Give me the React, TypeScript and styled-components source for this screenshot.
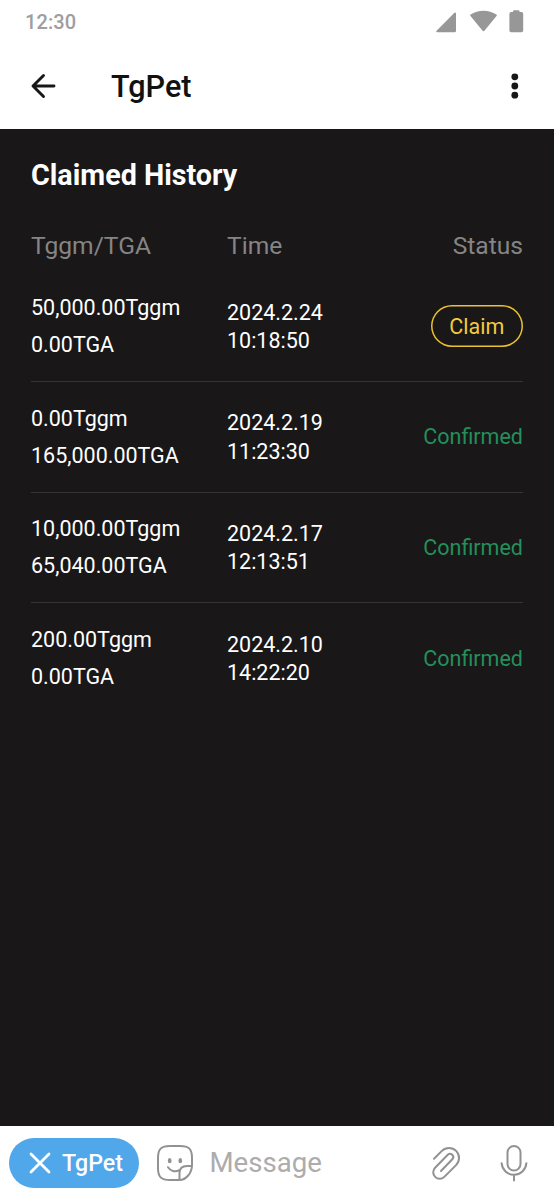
import React from "react";
import styled, { createGlobalStyle } from "styled-components";

const GlobalStyle = createGlobalStyle`
  *, *::before, *::after { box-sizing: border-box; }
  body { margin: 0; background: #fff; font-family: Roboto, sans-serif; }
  button, input { font-family: inherit; }
  svg { display: block; flex: none; }
`;

const Screen = styled.div`
  width: 554px;
  height: 1200px;
  display: flex;
  flex-direction: column;
  background: #fff;
  overflow: hidden;
`;

const StatusBar = styled.div`
  height: 43px;
  padding: 0 29px 0 25px;
  display: flex;
  justify-content: space-between;
  align-items: center;
  color: #979797;
`;

const Clock = styled.span`
  font-size: 20px;
  font-weight: 500;
  line-height: 24px;
  letter-spacing: 0.1px;
  color: #9e9e9e;
`;

const AppBar = styled.header`
  height: 86px;
  padding: 0 30px;
  display: flex;
  align-items: center;
`;

const IconButton = styled.button`
  padding: 0;
  border: 0;
  background: none;
  color: #171717;
`;

const AppTitle = styled.h1`
  flex: 1;
  margin: 0 0 0 55px;
  padding-top: 2px;
  font-size: 30.6px;
  line-height: 36px;
  font-weight: 500;
  color: #111;
`;

const Content = styled.main`
  flex: 1;
  padding: 28px 31px 0;
  background: #191718;
  color: #fff;
`;

const Heading = styled.h2`
  margin: 0;
  font-size: 28.7px;
  line-height: 36px;
  font-weight: 700;
`;

const Row = styled.div`
  display: grid;
  grid-template-columns: 196px 1fr auto;
  align-items: center;
`;

const HeaderRow = styled(Row)`
  height: 50px;
  margin-top: 27px;
  font-size: 24.6px;
  color: #858585;
`;

const RecordRow = styled(Row)`
  height: 110.8px;
  border-top: 1px solid transparent;
  font-size: 21.5px;
  & + & { border-top-color: #363435; }
`;

const Amounts = styled.div`
  line-height: 37px;
`;

const Time = styled.div`
  padding-top: 2px;
  line-height: 28.3px;
`;

const Confirmed = styled.span`
  color: #23905b;
`;

const ClaimButton = styled.button`
  width: 92.5px;
  height: 42px;
  padding: 2px 0 0;
  border: 0;
  border-radius: 21px;
  box-shadow: inset 0 0 0 1.5px #edc22f;
  background: none;
  color: #f3ca3e;
  font-size: 21.5px;
`;

const MessageBar = styled.footer`
  height: 74px;
  padding: 0 26px 0 9px;
  display: flex;
  align-items: center;
  color: #929292;
`;

const BotButton = styled.button`
  width: 130px;
  height: 50px;
  padding: 0 0 0 20px;
  display: flex;
  align-items: center;
  gap: 11px;
  border: 0;
  border-radius: 25px;
  background: #50a7ea;
  color: #fff;
  font-size: 23.2px;
  font-weight: 500;
`;

const StickerIcon = styled.svg`
  margin-left: 17px;
`;

const Placeholder = styled.span`
  flex: 1;
  margin-left: 15.5px;
  font-size: 27.6px;
  line-height: 32px;
  color: #acacac;
`;

const MicIcon = styled.svg`
  margin-left: 38px;
`;

interface ClaimRecord {
  tggm: string;
  tga: string;
  date: string;
  time: string;
  claimable?: boolean;
}

const records: ClaimRecord[] = [
  { tggm: "50,000.00", tga: "0.00", date: "2024.2.24", time: "10:18:50", claimable: true },
  { tggm: "0.00", tga: "165,000.00", date: "2024.2.19", time: "11:23:30" },
  { tggm: "10,000.00", tga: "65,040.00", date: "2024.2.17", time: "12:13:51" },
  { tggm: "200.00", tga: "0.00", date: "2024.2.10", time: "14:22:20" },
];

export default function App() {
  return (
    <Screen>
      <GlobalStyle />
      <StatusBar>
        <Clock>12:30</Clock>
        <svg width="89" height="24" viewBox="0 0 89 24" fill="currentColor">
          <path d="M1.5 22.2Q-.6 22.2.8 20.5L18 3.2Q20 1.7 20 3.8V20.7Q20 22.2 18.5 22.2Z" />
          <path d="M34.5 6Q33.7 5.2 34.6 4.5C42-.6 53-.6 60.4 4.5Q61.3 5.2 60.5 6L48.6 20.6Q47.5 21.9 46.4 20.6Z" />
          <path d="M75.2 2H77V1.4Q77 .2 78.2.2H82.4Q83.6.2 83.6 1.4V2H85.5Q87.2 2 87.2 3.7V20.5Q87.2 22.2 85.5 22.2H75.1Q73.4 22.2 73.4 20.5V3.7Q73.4 2 75.2 2Z" />
        </svg>
      </StatusBar>
      <AppBar>
        <IconButton aria-label="Back">
          <svg width="26" height="26" viewBox="0 0 26 26" fill="none" stroke="currentColor" strokeWidth="2.9" strokeLinecap="round" strokeLinejoin="round">
            <path d="M24 13H3M13.5 2.5 3 13l10.5 10.5" />
          </svg>
        </IconButton>
        <AppTitle>TgPet</AppTitle>
        <IconButton aria-label="Menu">
          <svg width="18" height="28" viewBox="0 0 18 28" fill="currentColor">
            <circle cx="8.8" cy="4.8" r="3.4" />
            <circle cx="8.8" cy="14" r="3.4" />
            <circle cx="8.8" cy="23.2" r="3.4" />
          </svg>
        </IconButton>
      </AppBar>
      <Content>
        <Heading>Claimed History</Heading>
        <HeaderRow>
          <span>Tggm/TGA</span>
          <span>Time</span>
          <span>Status</span>
        </HeaderRow>
        {records.map((r) => (
          <RecordRow key={r.date}>
            <Amounts>
              <div>{r.tggm}Tggm</div>
              <div>{r.tga}TGA</div>
            </Amounts>
            <Time>
              <div>{r.date}</div>
              <div>{r.time}</div>
            </Time>
            {r.claimable ? <ClaimButton>Claim</ClaimButton> : <Confirmed>Confirmed</Confirmed>}
          </RecordRow>
        ))}
      </Content>
      <MessageBar>
        <BotButton>
          <svg width="22" height="22" viewBox="0 0 22 22" fill="none" stroke="currentColor" strokeWidth="2.8" strokeLinecap="round">
            <path d="M2 2l18 18M20 2 2 20" />
          </svg>
          TgPet
        </BotButton>
        <StickerIcon width="38" height="38" viewBox="0 0 38 38" fill="none" stroke="currentColor" strokeWidth="2" strokeLinecap="round" strokeLinejoin="round">
          <path d="M23.5 36H14C5 36 2 33 2 24V14C2 5 5 2 14 2H24C33 2 36 5 36 14V21C36 29 30 36 23.5 36ZM23.5 36V29C23.5 24.5 26.5 22 31 22H36M12 23.2C14.5 27 19 28.5 23.2 26.2" />
          <ellipse cx="13.7" cy="16.7" rx="1.9" ry="2.6" fill="currentColor" stroke="none" />
          <ellipse cx="24.3" cy="16.7" rx="1.9" ry="2.6" fill="currentColor" stroke="none" />
        </StickerIcon>
        <Placeholder>Message</Placeholder>
        <svg width="32" height="38" viewBox="0 0 32 38" fill="none" stroke="currentColor" strokeWidth="2" strokeLinecap="round">
          <path d="M4 14.8 11.9 6.9A10 10 0 0 1 26.1 21.1L14.3 32.9A6.5 6.5 0 0 1 5.1 23.7L17.75 10.8A3.2 3.2 0 0 1 22.3 15.3L11 27" />
        </svg>
        <MicIcon width="28" height="38" viewBox="0 0 28 38" fill="none" stroke="currentColor" strokeWidth="2" strokeLinecap="round">
          <rect x="7.5" y="2" width="13" height="24.5" rx="6.5" />
          <path d="M1.6 19.2C2.2 26 7.4 30.8 14 30.8S25.8 26 26.4 19.2M14 30.8V36.6" />
        </MicIcon>
      </MessageBar>
    </Screen>
  );
}
